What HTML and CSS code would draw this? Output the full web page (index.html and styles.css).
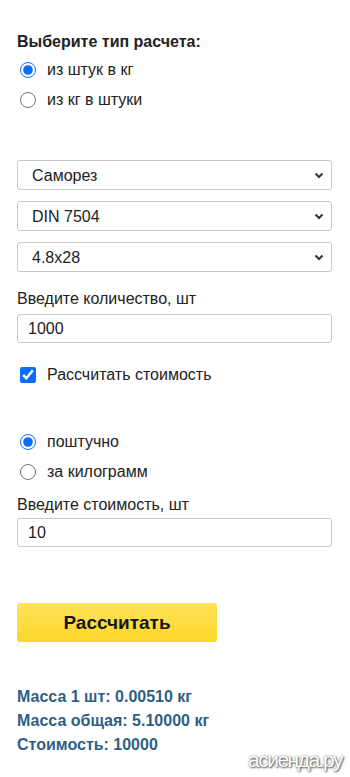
FILE: index.html
```html
<!DOCTYPE html>
<html lang="ru">
<head>
  <meta charset="UTF-8">
  <meta name="viewport" content="width=device-width, initial-scale=1">
  <title>Калькулятор веса крепежа</title>
  <link rel="stylesheet" href="styles.css">
</head>
<body>
  <main class="calc">
    <div class="calc-title">Выберите тип расчета:</div>
    <label class="option">
      <input type="radio" name="mode" checked>
      <span>из штук в кг</span>
    </label>
    <label class="option">
      <input type="radio" name="mode">
      <span>из кг в штуки</span>
    </label>

    <div class="selects">
      <select>
        <option>Саморез</option>
      </select>
      <select>
        <option>DIN 7504</option>
      </select>
      <select>
        <option>4.8x28</option>
      </select>
    </div>

    <div class="field">
      <label for="qty">Введите количество, шт</label>
      <input type="text" id="qty" value="1000">
    </div>

    <label class="option check">
      <input type="checkbox" checked>
      <span>Рассчитать стоимость</span>
    </label>

    <div class="price-mode">
      <label class="option">
        <input type="radio" name="price" checked>
        <span>поштучно</span>
      </label>
      <label class="option">
        <input type="radio" name="price">
        <span>за килограмм</span>
      </label>
    </div>

    <div class="field field-tight">
      <label for="price">Введите стоимость, шт</label>
      <input type="text" id="price" value="10">
    </div>

    <button type="button" class="calc-btn">Рассчитать</button>

    <div class="result">
      <p>Масса 1 шт: 0.00510 кг</p>
      <p>Масса общая: 5.10000 кг</p>
      <p>Стоимость: 10000</p>
    </div>
  </main>
  <div class="watermark">асиенда.ру</div>
</body>
</html>
```

FILE: styles.css
```css
:root {
  --text: #222;
  --border: #c8c8c8;
  --result: #2d5f86;
}

body {
  margin: 0;
  font-family: 'Liberation Sans', Arial, sans-serif;
  font-size: 16px;
  color: var(--text);
  background: #fff;
}

.calc {
  padding: 33px 18px 0 17px;
}

.calc-title {
  font-weight: bold;
  line-height: 18px;
  margin-bottom: 4px;
}

.option {
  display: flex;
  align-items: center;
  height: 30px;
  gap: 11px;
}

.option input {
  margin: 0 0 0 3px;
  width: 16px;
  height: 16px;
  accent-color: #0d6efd;
}

.option.check {
  margin-top: 17px;
}

.selects {
  display: flex;
  flex-direction: column;
  gap: 11px;
  margin-top: 45px;
}

select,
.field input {
  width: 100%;
  box-sizing: border-box;
  height: 30px;
  border: 1px solid var(--border);
  border-radius: 3px;
  font-family: inherit;
  font-size: 16px;
  color: var(--text);
  background: #fff;
}

select {
  appearance: none;
  padding: 0 24px 0 14px;
  background: #fff url("data:image/svg+xml,%3Csvg xmlns='http://www.w3.org/2000/svg' width='10' height='7' viewBox='0 0 10 7'%3E%3Cpath d='M1.5 1.5 5 5 8.5 1.5' fill='none' stroke='%23333' stroke-width='2'/%3E%3C/svg%3E") no-repeat right 7px center;
}

.field {
  margin-top: 18px;
}

.field label {
  display: block;
  line-height: 18px;
  margin-bottom: 6px;
}

.field input {
  padding: 0 10px;
  height: 29px;
}

.price-mode {
  margin-top: 37px;
}

.field-tight {
  margin-top: 9px;
}

.field-tight label {
  margin-bottom: 4px;
}

.calc-btn {
  display: block;
  margin-top: 56px;
  width: 200px;
  height: 39px;
  border: none;
  border-radius: 3px;
  background: linear-gradient(#fee359, #fdd62a);
  font-family: inherit;
  font-weight: bold;
  font-size: 19px;
  color: #161616;
  cursor: pointer;
}

.result {
  margin-top: 43px;
  color: var(--result);
  font-weight: bold;
  font-size: 16px;
}

.result p {
  margin: 0;
  line-height: 24px;
}

.watermark {
  position: absolute;
  left: 248px;
  top: 748px;
  font-family: 'Liberation Sans', Arial, sans-serif;
  font-size: 21px;
  letter-spacing: -1.5px;
  color: #fff;
  text-shadow: 1px 1px 2px #555, 0 0 2px #777;
}
```
